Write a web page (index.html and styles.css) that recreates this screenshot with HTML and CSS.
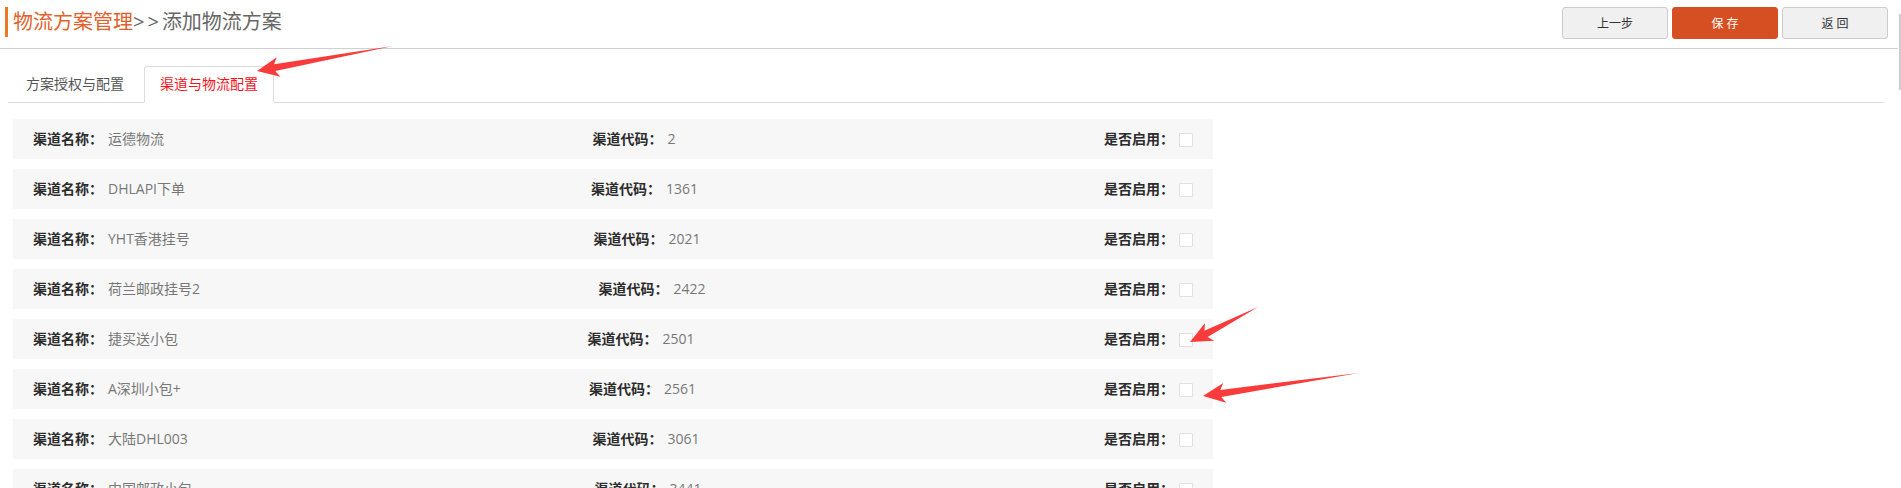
FILE: index.html
```html
<!DOCTYPE html>
<html lang="zh-CN">
<head>
  <meta charset="UTF-8">
  <title>添加物流方案</title>
  <link rel="stylesheet" href="styles.css">
</head>
<body>
  <div class="top-bar">
    <h1 class="page-title"><span class="crumb">物流方案管理</span><span class="sep">&gt;&gt;</span>添加物流方案</h1>
    <div class="actions">
      <button class="btn">上一步</button>
      <button class="btn btn-save">保 存</button>
      <button class="btn">返 回</button>
    </div>
  </div>

  <div class="content">
    <ul class="tabs">
      <li class="tab">方案授权与配置</li>
      <li class="tab active">渠道与物流配置</li>
    </ul>

    <div class="channel-list">
      <div class="channel">
        <div class="field"><span class="label">渠道名称：</span><span class="value">运德物流</span></div>
        <div class="field"><span class="label">渠道代码：</span><span class="value">2</span></div>
        <div class="field"><span class="label">是否启用：</span><input type="checkbox" class="check"></div>
      </div>
      <div class="channel">
        <div class="field"><span class="label">渠道名称：</span><span class="value">DHLAPI下单</span></div>
        <div class="field"><span class="label">渠道代码：</span><span class="value">1361</span></div>
        <div class="field"><span class="label">是否启用：</span><input type="checkbox" class="check"></div>
      </div>
      <div class="channel">
        <div class="field"><span class="label">渠道名称：</span><span class="value">YHT香港挂号</span></div>
        <div class="field"><span class="label">渠道代码：</span><span class="value">2021</span></div>
        <div class="field"><span class="label">是否启用：</span><input type="checkbox" class="check"></div>
      </div>
      <div class="channel">
        <div class="field"><span class="label">渠道名称：</span><span class="value">荷兰邮政挂号2</span></div>
        <div class="field"><span class="label">渠道代码：</span><span class="value">2422</span></div>
        <div class="field"><span class="label">是否启用：</span><input type="checkbox" class="check"></div>
      </div>
      <div class="channel">
        <div class="field"><span class="label">渠道名称：</span><span class="value">捷买送小包</span></div>
        <div class="field"><span class="label">渠道代码：</span><span class="value">2501</span></div>
        <div class="field"><span class="label">是否启用：</span><input type="checkbox" class="check"></div>
      </div>
      <div class="channel">
        <div class="field"><span class="label">渠道名称：</span><span class="value">A深圳小包+</span></div>
        <div class="field"><span class="label">渠道代码：</span><span class="value">2561</span></div>
        <div class="field"><span class="label">是否启用：</span><input type="checkbox" class="check"></div>
      </div>
      <div class="channel">
        <div class="field"><span class="label">渠道名称：</span><span class="value">大陆DHL003</span></div>
        <div class="field"><span class="label">渠道代码：</span><span class="value">3061</span></div>
        <div class="field"><span class="label">是否启用：</span><input type="checkbox" class="check"></div>
      </div>
      <div class="channel">
        <div class="field"><span class="label">渠道名称：</span><span class="value">中国邮政小包</span></div>
        <div class="field"><span class="label">渠道代码：</span><span class="value">3441</span></div>
        <div class="field"><span class="label">是否启用：</span><input type="checkbox" class="check"></div>
      </div>
    </div>
  </div>

  <div class="scroll-thumb"></div>

  <!-- annotation arrows -->
  <svg class="marks" width="1901" height="488" viewBox="0 0 1901 488">
    <polygon points="393,46 274.1,64.3 276.8,57.2 257,71 280.4,76.8 275.3,71.1"/>
    <polygon points="1258,307 1204.4,330.7 1205,323 1190,342 1214.2,340.8 1207.6,336.9"/>
    <polygon points="1359,373 1220.3,389.9 1223.3,382.9 1203,396 1226.3,402.7 1221.3,396.9"/>
  </svg>
</body>
</html>
```

FILE: styles.css
```css
html {
  overflow: hidden;
}
body {
  margin: 0;
  font-family: "Open Sans", "Noto Sans CJK SC", sans-serif;
  font-size: 14px;
  color: #333;
  background: #fff;
}
.top-bar {
  display: flex;
  justify-content: space-between;
  align-items: flex-start;
  height: 48px;
  margin-right: 3px;
  padding: 0 10px 0 5px;
  border-bottom: 1px solid #d0d0d0;
}
.page-title {
  margin: 7px 0 0;
  height: 30px;
  padding-left: 5px;
  border-left: 3px solid #ec7a22;
  font-size: 20px;
  font-weight: normal;
  line-height: 30px;
  color: #666;
}
.crumb {
  color: #e2612a;
}
.sep {
  letter-spacing: 3px;
}
.actions {
  display: flex;
  gap: 4px;
  margin-top: 7px;
}
.btn {
  width: 106px;
  height: 32px;
  border: 1px solid #ccc;
  border-radius: 3px;
  background: #f0f0f0;
  color: #333;
  font-family: "Open Sans", "Noto Sans CJK SC", sans-serif;
  font-size: 12px;
  cursor: pointer;
}
.btn-save {
  border-color: #d64f22;
  background: #d64f22;
  color: #fff;
}
.content {
  margin: 0 17px 0 8px;
}
.tabs {
  display: flex;
  gap: 4px;
  margin: 17px 0 0;
  padding: 0 0 0 2px;
  list-style: none;
  border-bottom: 1px solid #ddd;
}
.tab {
  margin-bottom: -1px;
  padding: 7px 15px 8px;
  border: 1px solid transparent;
  border-radius: 3px 3px 0 0;
  line-height: 20px;
  color: #555;
}
.tab.active {
  border-color: #ddd #ddd #fff;
  background: #fff;
  color: #f5121b;
}
.channel-list {
  margin: 16px 0 0 5px;
}
.channel {
  display: flex;
  justify-content: space-between;
  align-items: center;
  width: 1200px;
  height: 40px;
  margin-bottom: 10px;
  padding: 0 20px;
  box-sizing: border-box;
  background: #f7f7f7;
}
.field {
  display: flex;
  align-items: center;
  line-height: 40px;
}
.label {
  width: 70px;
  font-weight: bold;
  color: #2b2b2b;
}
.value {
  margin-left: 5px;
  color: #777;
}
.check {
  appearance: none;
  width: 14px;
  height: 14px;
  margin: 1px 0 0 5px;
  border: 1px solid #e0e0e0;
  border-radius: 1px;
  background: #fff;
  box-sizing: border-box;
}
.scroll-thumb {
  position: fixed;
  top: 14px;
  right: 0;
  width: 2px;
  height: 76px;
  background: #ccc;
}
.marks {
  position: absolute;
  top: 0;
  left: 0;
  pointer-events: none;
}
.marks polygon {
  fill: #fa3b3b;
}
```
